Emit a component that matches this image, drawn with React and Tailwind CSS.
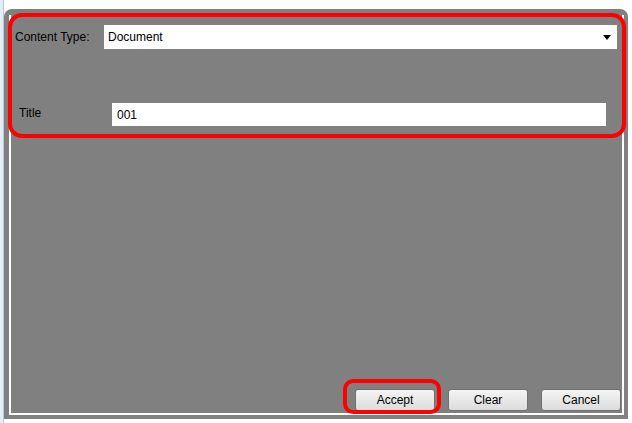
export default function App() {
  const btn =
    "h-[22px] w-[80px] rounded-[3px] border border-[#707070] bg-gradient-to-b from-[#f4f4f4] to-[#dcdcdc] text-[12px] leading-none text-black flex items-center justify-center";
  return (
    <div
      className="relative flex w-[632px] h-[423px] bg-white overflow-hidden"
      style={{ fontFamily: '"Liberation Sans", Arial, sans-serif' }}
    >
      <div className="w-[4px] h-full bg-[#e4ecf5] border-r border-[#b4c6da]" />
      <div className="mt-[9px] mb-[4px] w-[624px] bg-[#808080] rounded-t-[8px] pl-[5px] pr-[4px] pt-[6px] pb-[4px] flex">
        <div className="flex-1 flex flex-col border-l-2 border-r-2 border-b-2 border-white">
          <div className="pt-[10px] flex items-center">
            <div className="w-[93px] pl-[4px] text-[12px] text-black leading-none">Content Type:</div>
            <div className="w-[513px] h-[24px] bg-white flex items-center justify-between pl-[4px] pr-[6px]">
              <span className="text-[12px] text-black leading-none">Document</span>
              <svg width="8" height="5" viewBox="0 0 8 5">
                <path d="M0 0H8L4 5Z" fill="#000" />
              </svg>
            </div>
          </div>
          <div className="mt-[54px] flex items-center">
            <div className="w-[101px] pl-[8px] text-[12px] text-black leading-none -mt-[4px]">Title</div>
            <div className="w-[494px] h-[23px] bg-white flex items-center pl-[5px]">
              <span className="text-[12px] text-black leading-none">001</span>
            </div>
          </div>
          <div className="flex-1" />
          <div className="flex justify-end gap-[13px] pb-[2px] pr-[1px]">
            <button className={btn}>Accept</button>
            <button className={btn}>Clear</button>
            <button className={btn}>Cancel</button>
          </div>
        </div>
      </div>
      <div className="absolute left-[8px] top-[13px] w-[618px] h-[125px] border-[4px] border-[#ff0000] rounded-[14px] pointer-events-none" />
      <div className="absolute left-[343px] top-[379px] w-[98px] h-[35px] border-[4px] border-[#ff0000] rounded-[10px] pointer-events-none" />
    </div>
  );
}
